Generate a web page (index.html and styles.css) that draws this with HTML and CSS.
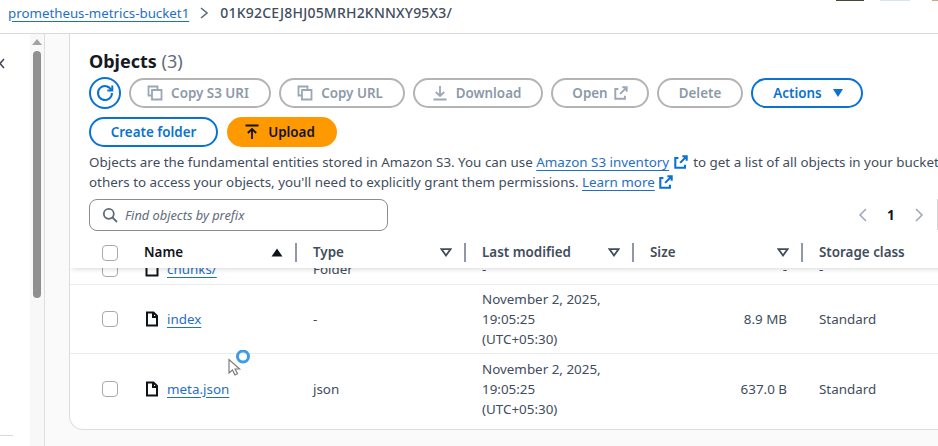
FILE: index.html
```html
<!DOCTYPE html>
<html lang="en">
<head>
<meta charset="utf-8">
<title>Objects</title>
<link rel="stylesheet" href="styles.css">
</head>
<body>
<header class="crumbs">
  <a class="link crumb-link" href="#">prometheus-metrics-bucket1</a>
  <svg class="crumb-sep" width="10" height="14" viewBox="0 0 10 14"><path d="M2 2l6 5-6 5" fill="none" stroke="#5f6b7a" stroke-width="1.6"/></svg>
  <span class="crumb-current">01K92CEJ8HJ05MRH2KNNXY95X3/</span>
  <span class="sliver sliver-a"></span><span class="sliver sliver-b"></span><span class="sliver sliver-c"></span>
</header>
<div class="shell">
  <aside class="side">
    <svg class="close" width="6" height="14" viewBox="0 0 6 14"><path d="M-4 2l8 9M4 2l-8 9" fill="none" stroke="#414d5c" stroke-width="1.6"/></svg>
    <span class="side-rule"></span>
  </aside>
  <div class="scrollbar">
    <span class="scroll-arrow"></span>
    <span class="scroll-thumb"></span>
  </div>
  <main class="content">
    <section class="card">
      <h2 class="title">Objects <span class="count">(3)</span></h2>
      <div class="toolbar">
        <button class="btn round"><svg width="20" height="20" viewBox="0 0 20 20"><path d="M16.4 7.2A7 7 0 1 0 17 10" fill="none" stroke="#0972d3" stroke-width="2"/><path d="M17.3 2.6v5h-5" fill="none" stroke="#0972d3" stroke-width="2"/></svg></button>
        <button class="btn off w-s3"><svg class="ico" width="16" height="16" viewBox="0 0 16 16"><path d="M5 5h9.5v9.5H5zM5 10.5H1.500V1.500h9V5" fill="none" stroke="#9ba7b6" stroke-width="1.800"/></svg>Copy S3 URI</button>
        <button class="btn off w-url"><svg class="ico" width="16" height="16" viewBox="0 0 16 16"><path d="M5 5h9.5v9.5H5zM5 10.5H1.500V1.500h9V5" fill="none" stroke="#9ba7b6" stroke-width="1.800"/></svg>Copy URL</button>
        <button class="btn off w-dl"><svg class="ico" width="16" height="16" viewBox="0 0 16 16"><path d="M1.500 14.500h13M8 1v10M3.800 7L8 11l4.200-4" fill="none" stroke="#9ba7b6" stroke-width="1.800"/></svg>Download</button>
        <button class="btn off w-open">Open<svg class="ico-after" width="14" height="14" viewBox="0 0 16 16"><path d="M5 3.500H1.500v11h11V11M9.500 1.500h5v5M14.500 1.500L7 9" fill="none" stroke="#9ba7b6" stroke-width="2.200"/></svg></button>
        <button class="btn off w-del">Delete</button>
        <button class="btn on w-act">Actions<svg class="caret" width="12" height="10" viewBox="0 0 12 10"><path d="M1 1h10L6 9z" fill="#0972d3"/></svg></button>
      </div>
      <div class="toolbar second">
        <button class="btn on w-folder">Create folder</button>
        <button class="btn primary w-up"><svg class="ico" width="16" height="16" viewBox="0 0 16 16"><path d="M1.500 1.500h13M8 15V5M3.800 9L8 5l4.200 4" fill="none" stroke="#0f141a" stroke-width="1.800"/></svg>Upload</button>
      </div>
      <p class="desc">Objects are the fundamental entities stored in Amazon S3. You can use <a class="link" href="#">Amazon S3 inventory</a> <svg class="ext" width="14" height="14" viewBox="0 0 16 16"><path d="M5 3.500H1.500v11h11V11M9.500 1.500h5v5M14.500 1.500L7 9" fill="none" stroke="#0972d3" stroke-width="2.400"/></svg> to get a list of all objects in your bucket. For others to access your objects, you'll need to explicitly grant them permissions. <a class="link" href="#">Learn more</a> <svg class="ext" width="14" height="14" viewBox="0 0 16 16"><path d="M5 3.500H1.500v11h11V11M9.500 1.500h5v5M14.500 1.500L7 9" fill="none" stroke="#0972d3" stroke-width="2.400"/></svg></p>
      <div class="filter-row">
        <div class="search">
          <svg width="16" height="16" viewBox="0 0 16 16"><circle cx="6.800" cy="6.800" r="5" fill="none" stroke="#5f6b7a" stroke-width="1.800"/><path d="M10.500 10.500l4.500 4.500" stroke="#5f6b7a" stroke-width="1.800"/></svg>
          <span class="placeholder">Find objects by prefix</span>
        </div>
        <nav class="pager">
          <svg width="10" height="14" viewBox="0 0 10 14"><path d="M8 1L2 7l6 6" fill="none" stroke="#9ba7b6" stroke-width="1.500"/></svg>
          <span class="page-no">1</span>
          <svg width="10" height="14" viewBox="0 0 10 14"><path d="M2 1l6 6-6 6" fill="none" stroke="#9ba7b6" stroke-width="1.500"/></svg>
          <span class="pager-rule"></span>
        </nav>
      </div>
      <div class="thead row-grid">
        <div class="cell-check"><span class="check"></span><span class="rule soft"></span></div>
        <div class="th name-cell">Name<svg class="sort" width="12" height="9" viewBox="0 0 12 9"><path d="M6 .5l5.500 8H.5z" fill="#0f141a"/></svg><span class="rule"></span></div>
        <div class="th">Type<svg class="sort" width="12" height="9" viewBox="0 0 12 9"><path d="M1.500 1.200h9L6 7.500z" fill="none" stroke="#414d5c" stroke-width="1.800"/></svg><span class="rule"></span></div>
        <div class="th">Last modified<svg class="sort" width="12" height="9" viewBox="0 0 12 9"><path d="M1.500 1.200h9L6 7.500z" fill="none" stroke="#414d5c" stroke-width="1.800"/></svg><span class="rule"></span></div>
        <div class="th">Size<svg class="sort" width="12" height="9" viewBox="0 0 12 9"><path d="M1.500 1.200h9L6 7.500z" fill="none" stroke="#414d5c" stroke-width="1.800"/></svg><span class="rule"></span></div>
        <div class="th last">Storage class</div>
      </div>
      <div class="tbody">
        <div class="rows">
          <div class="row row-grid short">
            <div class="cell-check"><span class="check"></span></div>
            <div class="td name-td"><svg class="file" width="14" height="16" viewBox="0 0 14 16"><path d="M1.500 1.500h11v13h-11z" fill="none" stroke="#0f141a" stroke-width="2"/></svg><a class="link" href="#">chunks/</a></div>
            <div class="td">Folder</div>
            <div class="td">-</div>
            <div class="td right">-</div>
            <div class="td">-</div>
          </div>
          <div class="row row-grid">
            <div class="cell-check"><span class="check"></span></div>
            <div class="td name-td"><svg class="file" width="14" height="16" viewBox="0 0 14 16"><path d="M2 1.500h6.500l3.500 3.500v9.500H2zM8 1.500V6h4" fill="none" stroke="#0f141a" stroke-width="2"/></svg><a class="link" href="#">index</a></div>
            <div class="td">-</div>
            <div class="td date">November 2, 2025,<br>19:05:25<br>(UTC+05:30)</div>
            <div class="td right">8.9 MB</div>
            <div class="td">Standard</div>
          </div>
          <div class="row row-grid">
            <div class="cell-check"><span class="check"></span></div>
            <div class="td name-td"><svg class="file" width="14" height="16" viewBox="0 0 14 16"><path d="M2 1.500h6.500l3.500 3.500v9.500H2zM8 1.500V6h4" fill="none" stroke="#0f141a" stroke-width="2"/></svg><a class="link" href="#">meta.json</a></div>
            <div class="td">json</div>
            <div class="td date">November 2, 2025,<br>19:05:25<br>(UTC+05:30)</div>
            <div class="td right">637.0 B</div>
            <div class="td">Standard</div>
          </div>
        </div>
      </div>
    </section>
  </main>
</div>
<svg class="cursor" width="30" height="26" viewBox="0 0 30 26">
  <path d="M3 9.500V23l3.500-3 2.500 5 2.500-1.200-2.400-4.800h4.500z" fill="#fff" stroke="#7c7c7c" stroke-width="1.200"/>
  <circle cx="17" cy="6.500" r="5.500" fill="none" stroke="#3d9be9" stroke-width="3"/>
</svg>
</body>
</html>
```
FILE: styles.css
```css
* { box-sizing: border-box; }
html, body { margin: 0; height: 446px; overflow: hidden; }
body {
  width: 938px;
  position: relative;
  background: #fff;
  color: #0f141a;
  font-family: "Noto Sans", "Open Sans", "Liberation Sans", sans-serif;
  font-size: 13.4px;
  line-height: 20px;
}
.link { color: #1f6fc5; text-decoration: underline; text-underline-offset: 3px; }
.crumbs {
  height: 34px;
  padding: 0 0 8px 8px;
  display: flex;
  align-items: center;
  border-bottom: 1px solid #d9d9d9;
}
.crumb-link { font-size: 13.3px; }
.crumb-sep { margin: 0 11px 0 10px; }
.crumb-current { font-size: 14px; color: #414d5c; font-weight: 500; letter-spacing: .2px; }
.sliver { position: absolute; top: 0; height: 1px; }
.sliver-a { left: 836px; width: 28px; background: #4b4636; }
.sliver-b { left: 880px; width: 30px; background: #cfe6f0; }
.sliver-c { left: 932px; width: 6px; background: #d2a77f; }
.shell { display: flex; height: 412px; }
.side { width: 30px; position: relative; background: #fff; }
.close { position: absolute; left: 0; top: 23px; }
.side-rule { position: absolute; left: 0; top: 401px; width: 13px; height: 1px; background: #d9d9d9; }
.scrollbar {
  width: 15px;
  background: #f8f8f8;
  border-right: 1px solid #dedede;
  display: flex;
  flex-direction: column;
  align-items: center;
  padding-top: 5px;
}
.scroll-arrow {
  width: 0; height: 0;
  border-left: 5px solid transparent;
  border-right: 5px solid transparent;
  border-bottom: 6px solid #a3a3a3;
}
.scroll-thumb { width: 8px; height: 247px; margin-top: 6px; border-radius: 4px; background: #8f8f8f; }
.content { flex: 1; background: #fafafa; padding-left: 24px; overflow: hidden; }
.card {
  width: 920px;
  height: 396px;
  background: #fff;
  border: 1px solid #dcdcdc;
  border-radius: 0 0 0 14px;
  border-top: 0;
  padding: 15px 0 0 19px;
  overflow: hidden;
}
.title { margin: 0; font-size: 18px; line-height: 24px; font-weight: 700; color: #16191f; }
.count { font-weight: 400; color: #5f6b7a; }
.toolbar { display: flex; gap: 8px; margin-top: 4px; align-items: center; height: 32px; }
.toolbar.second { margin-top: 7px; gap: 9px; }
.btn {
  height: 30px;
  border-radius: 15px;
  border: 2px solid;
  background: #fff;
  font: 600 13.4px/20px "Noto Sans", "Open Sans", sans-serif;
  padding: 0;
  display: flex;
  align-items: center;
  justify-content: center;
}
.round { width: 32px; height: 32px; border-radius: 50%; border-color: #0972d3; }
.off { color: #8d99a8; border-color: #b4b4b4; }
.on { color: #0972d3; border-color: #0972d3; }
.primary { background: #ff9900; border-color: #ff9900; color: #0f141a; }
.w-s3 { width: 142px; padding-right: 4px; } .w-url { width: 126px; padding-right: 4px; } .w-dl { width: 130px; padding-right: 3px; }
.w-open { width: 98px; } .w-del { width: 86px; } .w-act { width: 112px; padding-left: 3px; }
.w-folder { width: 129px; } .w-up { width: 110px; padding-right: 5px; }
.ico { margin-right: 8px; }
.ico-after { margin-left: 6px; }
.caret { margin-left: 10px; }
.desc { margin: 4px 0 0; width: 880px; height: 40px; overflow: hidden; color: #414d5c; line-height: 20px; }
.ext { vertical-align: -2px; margin-right: 2px; margin-left: 1px; }
.filter-row { display: flex; align-items: center; margin-top: 7px; height: 31px; }
.search {
  width: 299px;
  height: 32px;
  border: 1px solid #8c8c94;
  border-radius: 8px;
  display: flex;
  align-items: center;
  gap: 7px;
  padding-left: 12px;
}
.placeholder { font-style: italic; color: #5f6b7a; font-size: 12.8px; }
.pager { margin-left: 470px; display: flex; align-items: center; gap: 16px; }
.page-no { font-weight: 700; margin: 0 3px; }
.pager-rule { width: 1px; height: 31px; background: #d5d5d5; margin-left: -3px; }
.row-grid { display: grid; grid-template-columns: 58px 169px 169px 168px 169px 169px; }
.thead {
  height: 31px;
  margin: 7px 0 0 -19px;
  width: 900px;
  align-items: center;
  background: #fff;
  box-shadow: 0 3px 5px -2px rgba(0,0,0,.16);
  position: relative;
}
.cell-check { display: flex; align-items: center; padding-left: 32px; gap: 10px; }
.check { width: 16px; height: 16px; border: 1.5px solid #a9a9a9; border-radius: 4px; background: #fff; display: block; flex: none; }
.rule { position: absolute; right: 0; width: 2px; height: 19px; background: #8d99a8; top: 6px; }
.rule.soft { position: static; width: 1px; background: #c8c8c8; }
.th { position: relative; height: 31px; line-height: 31px; padding-left: 16px; font-weight: 600; color: #414d5c; display: flex; align-items: center; }
.name-cell { color: #0f141a; }
.sort { position: absolute; right: 14px; top: 11px; }
.tbody { height: 161px; overflow: hidden; margin-left: -19px; width: 900px; }
.rows { margin-top: -15px; }
.row { height: 69px; border-bottom: 1px solid #e9ebed; align-items: center; }
.row:last-child { border-bottom: 0; }
.row.short { height: 32px; }
.td { padding-left: 16px; color: #414d5c; }
.name-td { display: flex; align-items: center; gap: 8px; padding-left: 17px; }
.file { flex: none; }
.right { text-align: right; padding-right: 16px; }
.cursor { position: absolute; left: 226px; top: 350px; }
```
